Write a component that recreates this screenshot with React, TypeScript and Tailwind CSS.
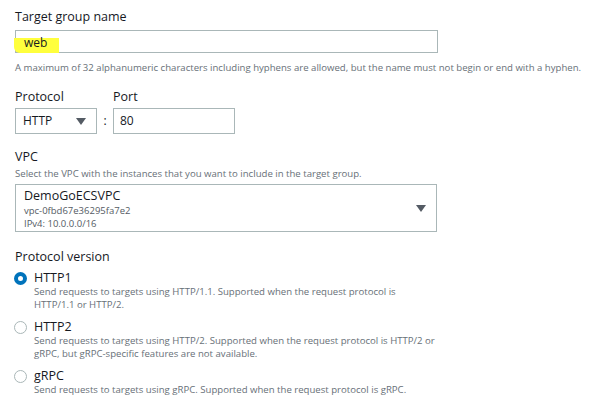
function Caret() {
  return (
    <svg width="10" height="7" viewBox="0 0 10 7" className="shrink-0">
      <path d="M0 0 H10 L5 7 Z" fill="#545b64" />
    </svg>
  );
}

function Radio({ checked }: { checked?: boolean }) {
  return checked ? (
    <span className="mt-[2px] w-[13px] h-[13px] rounded-full border-[4px] border-[#0073bb] bg-white shrink-0" />
  ) : (
    <span className="mt-[2px] w-[13px] h-[13px] rounded-full border border-[#aab7b8] bg-white shrink-0" />
  );
}

const versions = [
  {
    name: "HTTP1",
    checked: true,
    desc: ["Send requests to targets using HTTP/1.1. Supported when the request protocol is", "HTTP/1.1 or HTTP/2."],
  },
  {
    name: "HTTP2",
    desc: ["Send requests to targets using HTTP/2. Supported when the request protocol is HTTP/2 or", "gRPC, but gRPC-specific features are not available."],
  },
  {
    name: "gRPC",
    desc: ["Send requests to targets using gRPC. Supported when the request protocol is gRPC."],
  },
];

export default function App() {
  return (
    <div className="w-[593px] h-[408px] bg-white overflow-hidden font-['Open_Sans',sans-serif] text-[#16191f] pl-[15px] pt-[8px]">
      {/* Target group name */}
      <div className="text-[12.5px] leading-[17px]">Target group name</div>
      <div className="mt-[5px] w-[423px] h-[23px] border border-[#aab7b8] flex items-center">
        <span className="ml-[-2px] bg-[#ffff3d] h-[15px] mt-[7px] w-[45px] pl-[10px] text-[12px] leading-[10px] rounded-bl-[6px]">web</span>
      </div>
      <div className="mt-[8px] text-[9.6px] leading-[13px] text-[#687078] whitespace-nowrap">
        A maximum of 32 alphanumeric characters including hyphens are allowed, but the name must not begin or end with a hyphen.
      </div>

      {/* Protocol / Port */}
      <div className="mt-[14px] flex items-start">
        <div className="flex flex-col">
          <div className="text-[12.5px] leading-[17px]">Protocol</div>
          <div className="mt-[3px] w-[82px] h-[26px] border border-[#aab7b8] flex items-center justify-between pl-[7px] pr-[10px] text-[12px]">
            <span>HTTP</span>
            <Caret />
          </div>
        </div>
        <div className="w-[16px] mt-[20px] h-[26px] flex items-center justify-center text-[12px]">:</div>
        <div className="flex flex-col">
          <div className="text-[12.5px] leading-[17px]">Port</div>
          <div className="mt-[3px] w-[122px] h-[26px] border border-[#aab7b8] flex items-center pl-[6px] text-[12px]">80</div>
        </div>
      </div>

      {/* VPC */}
      <div className="mt-[14px] text-[12.5px] leading-[17px]">VPC</div>
      <div className="mt-[2px] text-[9.6px] leading-[13px] text-[#687078]">Select the VPC with the instances that you want to include in the target group.</div>
      <div className="mt-[4px] w-[422px] h-[48px] border border-[#aab7b8] flex items-center justify-between pl-[8px] pr-[10px]">
        <div className="flex flex-col">
          <span className="text-[12.5px] leading-[17px]">DemoGoECSVPC</span>
          <span className="text-[9.5px] leading-[13px] text-[#545b64]">vpc-0fbd67e36295fa7e2</span>
          <span className="text-[9.5px] leading-[13px] text-[#545b64]">IPv4: 10.0.0.0/16</span>
        </div>
        <Caret />
      </div>

      {/* Protocol version */}
      <div className="mt-[16px] text-[12.5px] leading-[17px]">Protocol version</div>
      <div className="mt-[5px] flex flex-col gap-[8px]">
        {versions.map((v) => (
          <div key={v.name} className="flex items-start gap-[7px] ml-[-1px]">
            <Radio checked={v.checked} />
            <div className="flex flex-col">
              <span className="text-[12.5px] leading-[15px]">{v.name}</span>
              {v.desc.map((d) => (
                <span key={d} className="text-[9.6px] leading-[13px] text-[#687078] whitespace-nowrap">{d}</span>
              ))}
            </div>
          </div>
        ))}
      </div>
    </div>
  );
}
